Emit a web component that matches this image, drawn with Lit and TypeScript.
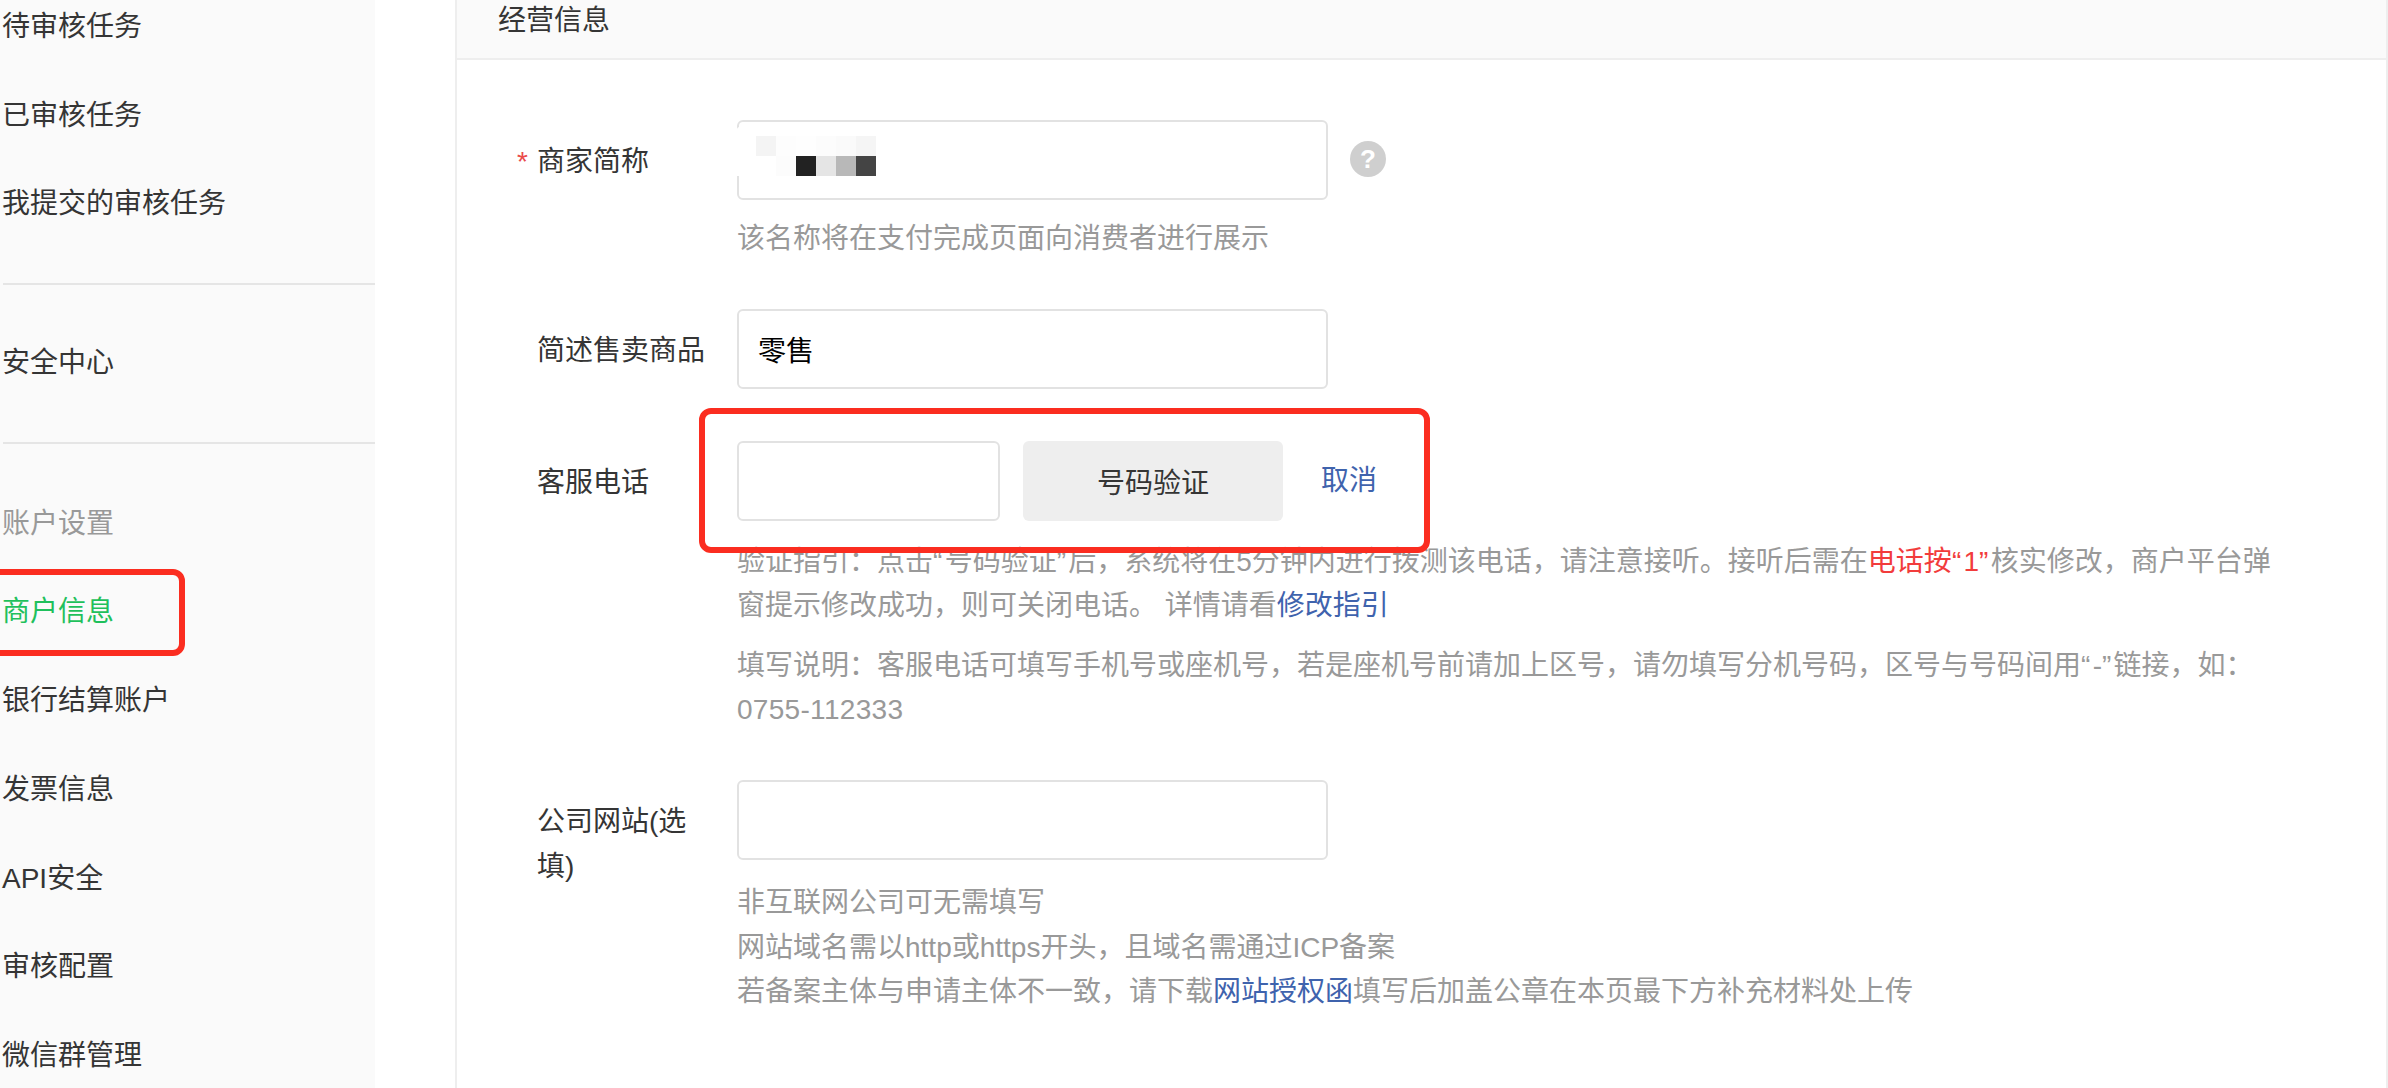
import { LitElement, html, css } from "lit";
import { customElement } from "lit/decorators.js";

const mosaic = [
  ["transparent", "#f4f4f4", "#fdfdfd", "#fefefe", "#fcfcfc", "#fafafa", "#f5f5f5"],
  ["transparent", "transparent", "#fcfcfc", "#222222", "#e5e5e5", "#b8b8b8", "#444444"],
];

@customElement("app-root")
export class AppRoot extends LitElement {
  static styles = css`
    :host {
      display: block;
      width: 2388px;
      height: 1088px;
      overflow: hidden;
      position: relative;
      background: #fff;
      font-family: "Liberation Sans", "Noto Sans CJK SC", sans-serif;
      font-size: 28px;
      color: #353535;
    }
    * { box-sizing: border-box; }
    .page { display: flex; height: 1088px; gap: 80px; }
    .side {
      width: 375px;
      flex: none;
      background: #fafafa;
      padding-left: 2px;
      overflow: hidden;
    }
    .nav { margin-top: -17px; }
    .item { height: 88.7px; line-height: 88.7px; white-space: nowrap; }
    .item.cap { color: #999; }
    .item.on { color: #1fc05c; }
    .rule { height: 2px; background: #e5e5e5; margin: 34px 0 34px 1px; }
    .rule.last { margin-bottom: 36px; }
    .panel {
      flex: 1;
      border-left: 2px solid #eeeeee;
      border-right: 2px solid #eeeeee;
      overflow: hidden;
    }
    .head {
      height: 60px;
      line-height: 42px;
      padding-left: 41px;
      background: #fafafa;
      border-bottom: 2px solid #eeeeee;
    }
    .body { padding: 60px 0 0 80px; }
    .row { display: flex; align-items: flex-start; }
    .label { width: 200px; flex: none; line-height: 45px; padding: 19px 24px 0 0; position: relative; }
    .req { position: absolute; left: -20px; top: 19px; color: #ea4a4a; }
    .field { flex: 1; min-width: 0; }
    .ctl { display: flex; align-items: center; }
    input {
      display: block;
      width: 591px;
      height: 80px;
      border: 2px solid #e2e2e2;
      border-radius: 6px;
      background: #fff;
      padding: 0 19px;
      font: inherit;
      color: #000;
      outline: none;
    }
    input.short { width: 263px; }
    .wrap { position: relative; }
    .mosaic {
      position: absolute;
      left: -1px;
      top: 6px;
      padding: 10px 0 0 0;
      display: grid;
      grid-template-columns: repeat(7, 20px);
      grid-auto-rows: 20px;
      background: #fff;
      border-radius: 6px 0 0 0;
    }
    .q {
      width: 36px;
      height: 36px;
      margin-left: 22px;
      margin-top: -3px;
      border-radius: 50%;
      background: #cfcfcf;
      color: #fff;
      font-size: 26px;
      font-weight: 700;
      line-height: 36px;
      text-align: center;
    }
    .btn {
      width: 260px;
      height: 80px;
      margin-left: 23px;
      border: 0;
      border-radius: 6px;
      background: #eeeeee;
      font: inherit;
      color: #353535;
    }
    .cancel { margin-left: 38px; margin-bottom: 6px; color: #3f63ad; text-decoration: none; }
    .hint { color: #999; line-height: 44px; white-space: nowrap; margin: 0; }
    .hint a { color: #3f63ad; text-decoration: none; }
    .hint em { color: #f23c3c; font-style: normal; }
    .qm { letter-spacing: 2.3px; }
    .num { letter-spacing: 0.3px; }
    .r1 { margin-bottom: 48px; }
    .r1 .hint { margin-top: 17px; }
    .r2 { margin-bottom: 52px; }
    .r3 { margin-bottom: 49px; }
    .g1 { margin-top: 19px; line-height: 43.5px; }
    .g2 { margin-top: 17px; line-height: 43.5px; }
    .g3 { margin-top: 21px; line-height: 44.5px; }
    .mark {
      position: absolute;
      border: 6px solid #fb2d20;
      border-radius: 12px;
      pointer-events: none;
    }
    .m1 { left: -20px; top: 569px; width: 205px; height: 87px; }
    .m2 { left: 699px; top: 408px; width: 731px; height: 145px; }
  `;

  render() {
    return html`
      <div class="page">
        <aside class="side">
          <nav class="nav">
            <div class="item">待审核任务</div>
            <div class="item">已审核任务</div>
            <div class="item">我提交的审核任务</div>
            <div class="rule"></div>
            <div class="item">安全中心</div>
            <div class="rule last"></div>
            <div class="item cap">账户设置</div>
            <div class="item on">商户信息</div>
            <div class="item">银行结算账户</div>
            <div class="item">发票信息</div>
            <div class="item">API安全</div>
            <div class="item">审核配置</div>
            <div class="item">微信群管理</div>
          </nav>
        </aside>
        <main class="panel">
          <div class="head">经营信息</div>
          <div class="body">
            <div class="row r1">
              <div class="label"><span class="req">*</span>商家简称</div>
              <div class="field">
                <div class="ctl">
                  <div class="wrap">
                    <input />
                    <div class="mosaic">
                      ${mosaic.flat().map((c) => html`<span style="background:${c}"></span>`)}
                    </div>
                  </div>
                  <span class="q">?</span>
                </div>
                <p class="hint">该名称将在支付完成页面向消费者进行展示</p>
              </div>
            </div>
            <div class="row r2">
              <div class="label">简述售卖商品</div>
              <div class="field"><input .value=${"零售"} /></div>
            </div>
            <div class="row r3">
              <div class="label">客服电话</div>
              <div class="field">
                <div class="ctl">
                  <input class="short" />
                  <button class="btn">号码验证</button>
                  <a class="cancel" href="#">取消</a>
                </div>
                <p class="hint g1">验证指引：点击<span class="qm">“</span>号码验证<span class="qm">”</span>后，系统将在5分钟内进行拨测该电话，请注意接听。接听后需在<em>电话按<span class="qm">“</span>1<span class="qm">”</span></em>核实修改，商户平台弹<br />窗提示修改成功，则可关闭电话。 详情请看<a href="#">修改指引</a></p>
                <p class="hint g2">填写说明：客服电话可填写手机号或座机号，若是座机号前请加上区号，请勿填写分机号码，区号与号码间用<span class="qm">“</span>-<span class="qm">”</span>链接，如：<br /><span class="num">0755-112333</span></p>
              </div>
            </div>
            <div class="row">
              <div class="label">公司网站(选<br />填)</div>
              <div class="field">
                <input />
                <p class="hint g3">非互联网公司可无需填写<br />网站域名需以http或https开头，且域名需通过ICP备案<br />若备案主体与申请主体不一致，请下载<a href="#">网站授权函</a>填写后加盖公章在本页最下方补充材料处上传</p>
              </div>
            </div>
          </div>
        </main>
      </div>
      <div class="mark m1"></div>
      <div class="mark m2"></div>
    `;
  }
}
